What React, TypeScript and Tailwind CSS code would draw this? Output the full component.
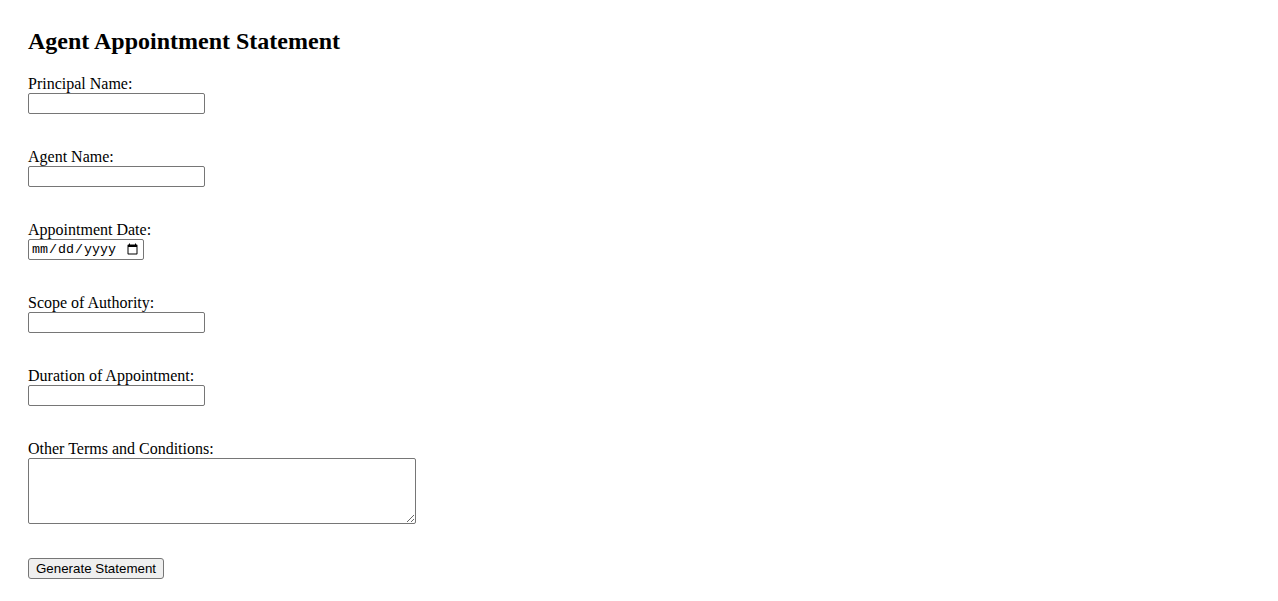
import { useState } from "react";

const fields = [
  { id: "principal", label: "Principal Name:", type: "text" },
  { id: "agent", label: "Agent Name:", type: "text" },
  { id: "date", label: "Appointment Date:", type: "date" },
  { id: "scope", label: "Scope of Authority:", type: "text" },
  { id: "duration", label: "Duration of Appointment:", type: "text" },
];

const inputBase =
  "block h-[21px] border border-[#767676] rounded-[2px] bg-white px-[2px] py-[1px] text-[13.33px] text-black";

const App = () => {
  const [values, setValues] = useState<Record<string, string>>({});
  const [terms, setTerms] = useState("");

  return (
    <div className="min-h-screen bg-white pl-[28px] pt-[27px] text-black font-['Liberation_Serif',serif]">
      <h2 className="h-[28px] text-[24px] leading-[28px] font-bold mb-[20px]">Agent Appointment Statement</h2>
      <form onSubmit={(e) => e.preventDefault()} className="flex flex-col items-start">
        {fields.map((f) => (
          <div key={f.id} className="mb-[34px]">
            <label htmlFor={f.id} className="block text-[16px] leading-[18px]">
              {f.label}
            </label>
            <input
              id={f.id}
              type={f.type}
              value={values[f.id] ?? ""}
              onChange={(e) => setValues({ ...values, [f.id]: e.target.value })}
              className={
                f.type === "date"
                  ? inputBase + " w-[116px] font-['Liberation_Mono',monospace]"
                  : inputBase + " w-[177px] font-['Liberation_Sans',Arial,sans-serif]"
              }
            />
          </div>
        ))}
        <div className="mb-[34px]">
          <label htmlFor="terms" className="block text-[16px] leading-[18px]">
            Other Terms and Conditions:
          </label>
          <textarea
            id="terms"
            value={terms}
            onChange={(e) => setTerms(e.target.value)}
            className="block w-[388px] h-[66px] border border-[#767676] rounded-[2px] bg-white p-[2px] text-[13.33px] font-['Liberation_Mono',monospace]"
          />
        </div>
        <button
          type="submit"
          className="h-[21px] w-[136px] border border-[#767676] rounded-[3px] bg-[#efefef] px-[6px] text-[13.33px] leading-[17px] text-black font-['Liberation_Sans',Arial,sans-serif]"
        >
          Generate Statement
        </button>
      </form>
    </div>
  );
};

export default App;
